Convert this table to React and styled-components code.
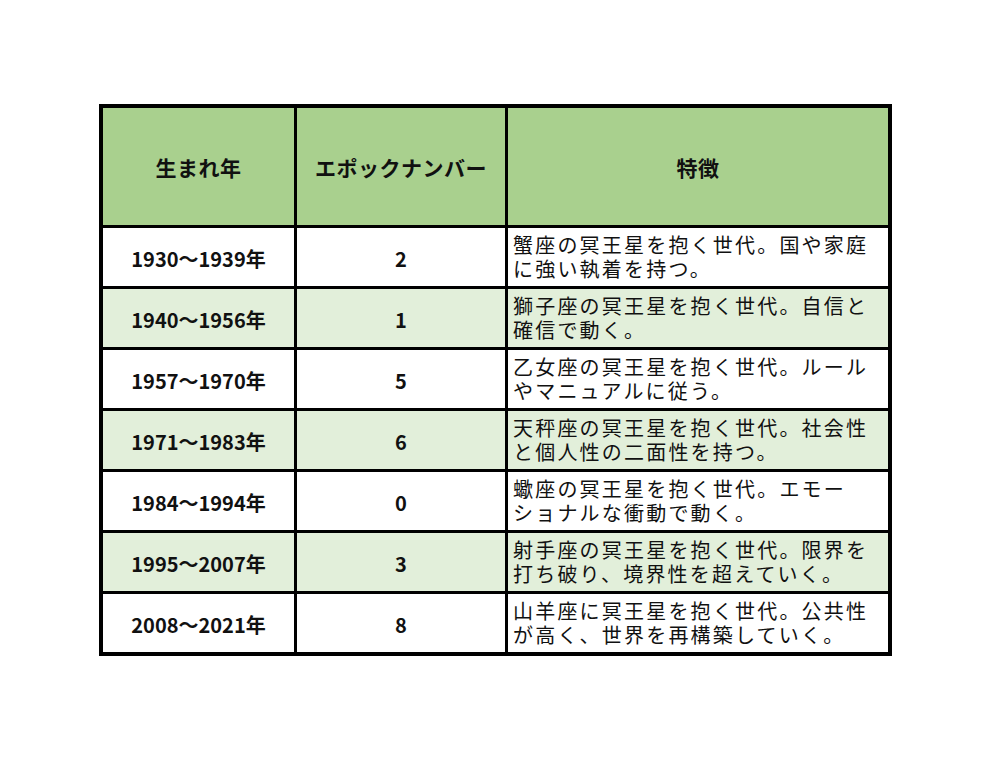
import React from 'react';
import styled, { createGlobalStyle } from 'styled-components';

const GlobalStyle = createGlobalStyle`
  html, body {
    margin: 0;
    padding: 0;
    background: #ffffff;
  }
  body {
    font-family: "Noto Sans CJK JP", "Noto Sans", sans-serif;
    color: #111111;
  }
`;

const Page = styled.div`
  width: 1003px;
  height: 768px;
  padding: 104px 0 0 99px;
  box-sizing: border-box;
`;

const Table = styled.table`
  border-collapse: separate;
  border-spacing: 0;
  border-top: 4px solid #000;
  border-left: 4px solid #000;
  table-layout: fixed;
  width: 793px;
`;

const Col = styled.col`
  width: ${props => props.$w}px;
`;

const HeadCell = styled.th`
  height: 117px;
  padding: 0;
  background: #a9d08e;
  border-right: ${props => (props.$last ? 4 : 3)}px solid #000;
  border-bottom: 3px solid #000;
  font-size: 21px;
  font-weight: 700;
  text-align: center;
  vertical-align: middle;
  letter-spacing: 0.5px;
  box-sizing: content-box;
`;

const Row = styled.tr`
  background: ${props => (props.$shade ? '#e2efda' : '#ffffff')};
`;

const Cell = styled.td`
  height: 55px;
  padding: 3px 0 0;
  border-right: 3px solid #000;
  border-bottom: ${props => (props.$bottom ? 4 : 3)}px solid #000;
  font-size: 20px;
  font-weight: 700;
  line-height: 24px;
  text-align: center;
  vertical-align: middle;
  box-sizing: content-box;
`;

const TextCell = styled.td`
  height: 58px;
  padding: 0 0 0 5px;
  border-right: 4px solid #000;
  border-bottom: ${props => (props.$bottom ? 4 : 3)}px solid #000;
  font-size: 20px;
  font-weight: 400;
  line-height: 24px;
  letter-spacing: 2.2px;
  text-align: left;
  vertical-align: middle;
  white-space: nowrap;
  box-sizing: content-box;
`;

const Line = styled.div`
  display: block;
`;

const rows = [
  { years: '1930〜1939年', num: '2', lines: ['蟹座の冥王星を抱く世代。国や家庭', 'に強い執着を持つ。'] },
  { years: '1940〜1956年', num: '1', lines: ['獅子座の冥王星を抱く世代。自信と', '確信で動く。'] },
  { years: '1957〜1970年', num: '5', lines: ['乙女座の冥王星を抱く世代。ルール', 'やマニュアルに従う。'] },
  { years: '1971〜1983年', num: '6', lines: ['天秤座の冥王星を抱く世代。社会性', 'と個人性の二面性を持つ。'] },
  { years: '1984〜1994年', num: '0', lines: ['蠍座の冥王星を抱く世代。エモー', 'ショナルな衝動で動く。'] },
  { years: '1995〜2007年', num: '3', lines: ['射手座の冥王星を抱く世代。限界を', '打ち破り、境界性を超えていく。'] },
  { years: '2008〜2021年', num: '8', lines: ['山羊座に冥王星を抱く世代。公共性', 'が高く、世界を再構築していく。'] },
];

export default function App() {
  return (
    <>
      <GlobalStyle />
      <Page>
        <Table>
          <colgroup>
            <Col $w={194} />
            <Col $w={211} />
            <Col $w={384} />
          </colgroup>
          <thead>
            <tr>
              <HeadCell>生まれ年</HeadCell>
              <HeadCell>エポックナンバー</HeadCell>
              <HeadCell $last>特徴</HeadCell>
            </tr>
          </thead>
          <tbody>
            {rows.map((r, i) => {
              const last = i === rows.length - 1;
              return (
                <Row key={r.years} $shade={i % 2 === 1}>
                  <Cell $bottom={last}>{r.years}</Cell>
                  <Cell $bottom={last}>{r.num}</Cell>
                  <TextCell $bottom={last}>
                    {r.lines.map(l => (
                      <Line key={l}>{l}</Line>
                    ))}
                  </TextCell>
                </Row>
              );
            })}
          </tbody>
        </Table>
      </Page>
    </>
  );
}
